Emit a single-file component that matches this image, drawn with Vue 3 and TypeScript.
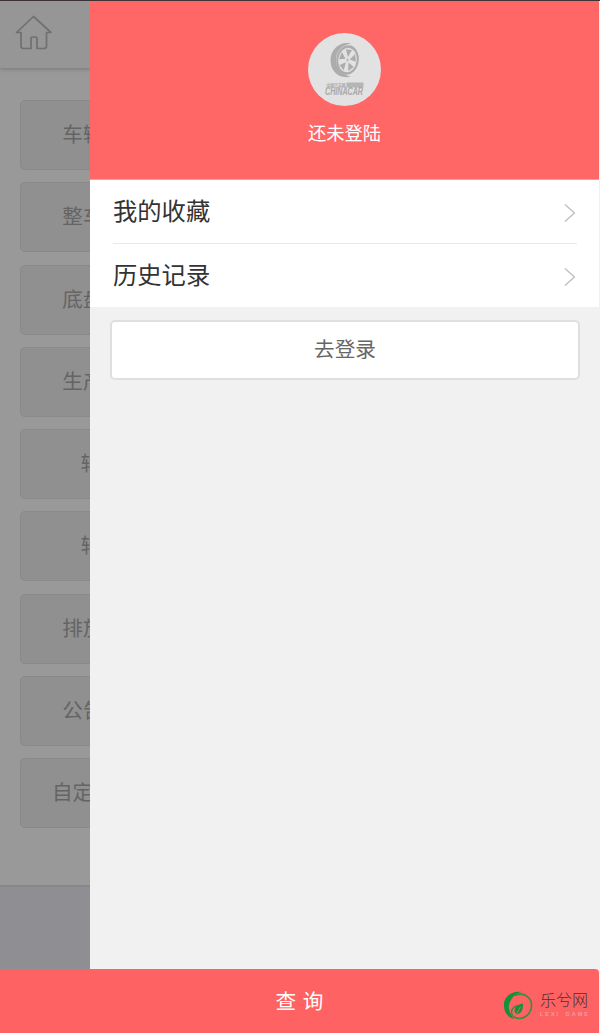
<script setup lang="ts">
const filters: string[] = [
  '车辆型号', '整车型号', '底盘型号', '生产企业', '轴 数', '轴 距', '排放标准', '公告批次', '自定义项目',
]
const links: string[] = ['我的收藏', '历史记录']
const spokes: number[] = [0, 72, 144, 216, 288]
</script>

<template>
  <div class="screen">
    <div class="main">
      <section class="page">
        <header class="topbar">
          <svg class="home" viewBox="0 0 38 36" width="38" height="36">
            <path d="M1.500 17.500 L18.500 1.500 L36 17.500 H31.500 V31 Q31.500 33.500 29 33.500 H22 V23.500 Q22 22 20.500 22 H17.500 Q16 22 16 23.500 V33.500 H8.500 Q6 33.500 6 31 V17.500 Z" />
          </svg>
        </header>
        <div class="filters">
          <div v-for="name in filters" :key="name" class="filter">{{ name }}</div>
        </div>
        <div class="tray"></div>
      </section>

      <aside class="drawer">
        <div class="profile">
          <div class="avatar">
            <svg viewBox="0 0 73 73" width="73" height="73">
              <path fill="#acacac" d="M43 10.500 C31 8 22.500 17 22.500 27.500 C22.500 39 32 46.500 43 43.500 C34 42 28 36 28 27 C28 18 34 12 43 10.500Z" />
              <g transform="translate(39.500 27) rotate(8) scale(.76 1)">
                <circle r="13.500" fill="none" stroke="#acacac" stroke-width="2.600" />
                <path v-for="angle in spokes" :key="angle" :transform="`rotate(${angle})`" d="M-4 -10.500 L4 -10.500 L0 -3 Z" fill="#acacac" />
                <circle r="1.500" fill="#b8b8b8" />
              </g>
              <text x="18.500" y="54" class="mark-small" textLength="19" lengthAdjust="spacingAndGlyphs">中国汽车网</text>
              <rect x="38.500" y="49.500" width="17" height="5" fill="#b5b5b5" />
              <text x="17" y="62" class="mark" textLength="38" lengthAdjust="spacingAndGlyphs">CHINACAR</text>
            </svg>
          </div>
          <div class="status">还未登陆</div>
        </div>
        <nav class="links">
          <div v-for="name in links" :key="name" class="link">
            <span>{{ name }}</span>
            <svg class="chevron" viewBox="0 0 12 20" width="12" height="20"><path d="M1 1.500 L10.500 10 L1 18.500" /></svg>
          </div>
        </nav>
        <button class="login">去登录</button>
      </aside>
    </div>

    <footer class="query">
      <span>查 询</span>
      <div class="brand">
        <svg viewBox="0 0 30 30" width="30" height="30">
          <path fill="#16913b" d="M19 1 C9-1 0 6 1 15 C1 22 6 27 11 28 C7 23 4 17 7 11 C9 6 13 2 19 1Z" />
          <path fill="none" stroke="#3b8b40" stroke-width="1.600" d="M12 4.500 C22 0 29 8 28.500 15 C28 25 18 30 11 26 C6 22 9 16 15 14.500" />
          <path fill="#16913b" d="M20 12.500 C14 13 9 18 13 23.500 C19 23 20 18 20 12.500Z" />
          <path d="M17.500 16 L12 25" stroke="#ff6262" stroke-width=".8" />
        </svg>
        <div class="brand-text">
          <svg class="brand-name" viewBox="0 0 49 19" width="49" height="19">
            <text x="0" y="15" textLength="48">乐兮网</text>
          </svg>
          <svg class="brand-latin" viewBox="0 0 49 7" width="49" height="7">
            <text x="0" y="5.500" textLength="48">LEXI GAME</text>
          </svg>
        </div>
      </div>
    </footer>
  </div>
</template>

<style>
body {
  margin: 0;
  background: #f1f1f1;
}
</style>

<style scoped>
.screen {
  box-sizing: border-box;
  width: 600px;
  height: 1033px;
  display: flex;
  flex-direction: column;
  overflow: hidden;
  border-top: 1px solid #3d3335;
  background: #f1f1f1;
  font-family: "Noto Sans CJK SC", sans-serif;
}
.main {
  display: flex;
  height: 968px;
  flex: none;
}
.page {
  width: 90px;
  overflow: hidden;
  flex: none;
  display: flex;
  flex-direction: column;
  background: #999;
}
.topbar {
  box-sizing: border-box;
  height: 67px;
  flex: none;
  padding: 14px 0 0 15px;
  background: #969696;
  box-shadow: 0 1px 4px #777;
}
.home {
  display: block;
  fill: none;
  stroke: #707070;
  stroke-width: 1.7;
  stroke-linejoin: round;
}
.filters {
  flex: 1;
  display: flex;
  flex-direction: column;
  gap: 12.3px;
  padding: 32px 0 0 20px;
}
.filter {
  box-sizing: border-box;
  width: 167px;
  height: 70px;
  flex: none;
  border: 1px solid #898989;
  border-radius: 5px;
  background: #909090;
  color: #646464;
  font-size: 20.6px;
  line-height: 64px;
  text-align: center;
  white-space: nowrap;
}
.tray {
  box-sizing: border-box;
  height: 84px;
  flex: none;
  border-top: 2px solid #87878a;
  background: #8e8e93;
}
.drawer {
  width: 509px;
  background: #f1f1f1;
}
.profile {
  box-sizing: border-box;
  height: 179px;
  padding-top: 32px;
  display: flex;
  flex-direction: column;
  align-items: center;
  border-bottom: 1px solid #ff9c9c;
  background: #ff6666;
}
.avatar {
  width: 73px;
  height: 73px;
  border-radius: 50%;
  background: #e2e2e2;
}
.avatar svg {
  display: block;
}
.mark {
  font: italic 700 10px "Liberation Sans", sans-serif;
  fill: #a8a8a8;
}
.mark-small {
  font-size: 5px;
  font-weight: 700;
  fill: #aaa;
}
.status {
  margin-top: 13px;
  font-size: 18.3px;
  line-height: 27px;
  color: #fff;
}
.links {
  padding: 0 22px 0 23px;
  background: #fff;
}
.link {
  box-sizing: border-box;
  height: 63px;
  display: flex;
  align-items: center;
  justify-content: space-between;
  font-size: 24.3px;
  line-height: 36px;
  color: #333;
}
.link span {
  margin-top: -4px;
}
.link + .link {
  height: 64px;
  border-top: 1px solid #e9e9e9;
}
.chevron {
  margin: 3px 1px 0 0;
  fill: none;
  stroke: #bbb;
  stroke-width: 1.2;
}
.login {
  box-sizing: border-box;
  display: block;
  width: 470px;
  height: 60px;
  margin: 13px 0 0 20px;
  padding: 0 0 5px;
  border: 2px solid #dfdfdf;
  border-radius: 5px;
  background: #fff;
  color: #666;
  font-family: inherit;
  font-size: 20.6px;
}
.query {
  position: relative;
  width: 599px;
  height: 64px;
  display: flex;
  justify-content: center;
  border-top-right-radius: 4px;
  background: #ff6262;
  color: #fff;
  font-size: 20.6px;
  line-height: 63px;
  word-spacing: 2px;
}
.brand {
  position: absolute;
  left: 503px;
  top: 22px;
  display: flex;
  gap: 7px;
}
.brand svg {
  display: block;
}
.brand-text {
  display: flex;
  flex-direction: column;
}
.brand-name {
  font-size: 16px;
  font-weight: 300;
  fill: #443437;
}
.brand-latin {
  font: 700 5.5px "Liberation Sans", sans-serif;
  fill: #e8a0a0;
}
</style>
